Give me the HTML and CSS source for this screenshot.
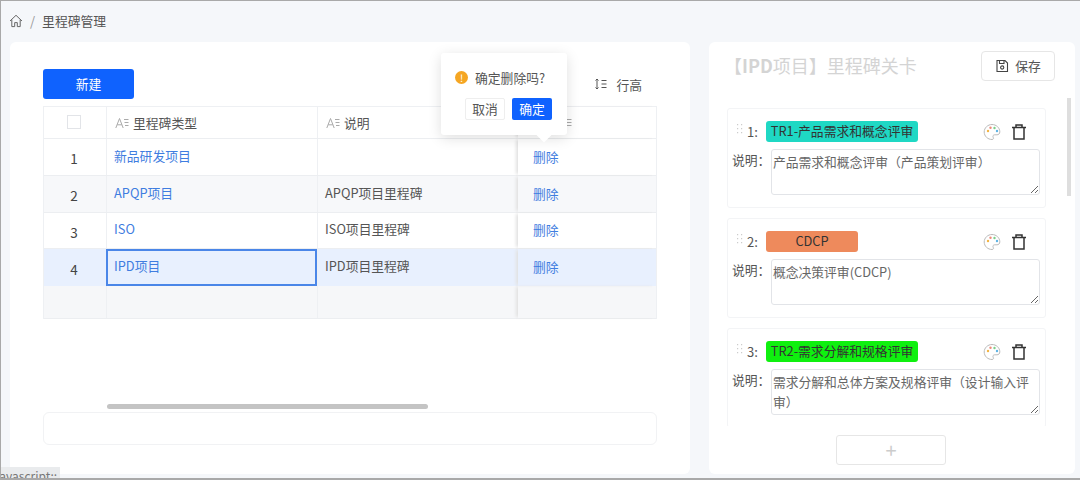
FILE: index.html
```html
<!DOCTYPE html>
<html lang="zh-CN">
<head>
<meta charset="utf-8">
<title>里程碑管理</title>
<link rel="stylesheet" href="styles.css">
</head>
<body>
<div class="app">
  <nav class="crumb">
    <svg class="home" viewBox="0 0 14 14" width="14" height="14"><path d="M1 7 7 1.3 13 7M2.800 5.600V12.600H5.700V8.600H8.300V12.600H11.200V5.600" fill="none" stroke="#666" stroke-width="1"/></svg>
    <span class="sep">/</span>
    <span class="crumb-title">里程碑管理</span>
  </nav>
  <main class="main">
    <section class="panel left">
      <div class="toolbar">
        <button class="btn-new">新建</button>
        <div class="row-height">
          <svg viewBox="0 0 14 14" width="14" height="14"><path d="M3 2V12M1.500 3.500 3 2 4.500 3.500M1.500 10.500 3 12 4.500 10.500M7.500 3.500H12.500M7.500 7H12.500M7.500 10.500H12.500" fill="none" stroke="#555" stroke-width="1"/></svg>
          <span>行高</span>
        </div>
      </div>
      <div class="table">
        <div class="row head">
          <div class="cell num"><span class="check"></span></div>
          <div class="cell"><svg class="aicon" viewBox="0 0 14 12" width="14" height="12"><path d="M.8 11 4.500 1.500 8.200 11M2.200 7.800H6.800M9 2.500H13.500M9.500 5.500H13.500M10 8.500H13.500" fill="none" stroke="#aaa" stroke-width="1"/></svg>里程碑类型</div>
          <div class="cell"><svg class="aicon" viewBox="0 0 14 12" width="14" height="12"><path d="M.8 11 4.500 1.500 8.200 11M2.200 7.800H6.800M9 2.500H13.500M9.500 5.500H13.500M10 8.500H13.500" fill="none" stroke="#aaa" stroke-width="1"/></svg>说明</div>
          <div class="cell act"><svg class="aicon" viewBox="0 0 14 12" width="14" height="12"><path d="M9 2.500H13.500M9 5.500H13.500M9 8.500H13.500" fill="none" stroke="#aaa" stroke-width="1"/></svg></div>
        </div>
        <div class="row r1">
          <div class="cell num">1</div>
          <div class="cell"><a class="link">新品研发项目</a></div>
          <div class="cell"></div>
          <div class="cell act"><a class="link">删除</a></div>
        </div>
        <div class="row r2 alt">
          <div class="cell num">2</div>
          <div class="cell"><a class="link">APQP项目</a></div>
          <div class="cell">APQP项目里程碑</div>
          <div class="cell act"><a class="link">删除</a></div>
        </div>
        <div class="row r3">
          <div class="cell num">3</div>
          <div class="cell"><a class="link">ISO</a></div>
          <div class="cell">ISO项目里程碑</div>
          <div class="cell act"><a class="link">删除</a></div>
        </div>
        <div class="row r4 selected">
          <div class="cell num">4</div>
          <div class="cell active"><a class="link">IPD项目</a></div>
          <div class="cell">IPD项目里程碑</div>
          <div class="cell act"><a class="link">删除</a></div>
        </div>
        <div class="row r5 blank">
          <div class="cell num"></div>
          <div class="cell"></div>
          <div class="cell"></div>
          <div class="cell act"></div>
        </div>
      </div>
      <div class="hscroll"><div class="hthumb"></div></div>
      <div class="footer-box"></div>
    </section>

    <section class="panel right">
      <header class="right-head">
        <h2 class="right-title">【<b>IPD</b>项目】里程碑关卡</h2>
        <button class="btn-save">
          <svg viewBox="0 0 14 14" width="14" height="14"><path d="M2 1.500H10L12.500 4V12.500H2ZM4.500 1.500V4.500H9V1.500" fill="none" stroke="#444" stroke-width="1.100"/><circle cx="7.200" cy="8.500" r="1.600" fill="none" stroke="#444" stroke-width="1.100"/></svg>
          保存
        </button>
      </header>
      <div class="list-wrap">
        <div class="cards">
          <article class="card">
            <div class="card-top">
              <svg class="drag" viewBox="0 0 8 12" width="8" height="12"><path d="M1 1h1.200v1.200H1zM5 1h1.200v1.200H5zM1 5h1.200v1.200H1zM5 5h1.200v1.200H5zM1 9h1.200v1.200H1zM5 9h1.200v1.200H5z" fill="#ccc"/></svg>
              <span class="idx">1:</span>
              <span class="tag teal">TR1-产品需求和概念评审</span>
              <svg class="palette" viewBox="0 0 18 18" width="18" height="18"><path d="M9 1.500C4.800 1.500 1.200 4.800 1.200 9S4.800 16.500 9 16.500C10.500 16.500 10.800 15.300 10.200 14.300 9.500 13 10.200 11.800 11.700 11.800H14C15.700 11.800 16.800 10.700 16.800 8.800 16.800 4.700 13.200 1.500 9 1.500Z" fill="#fff" stroke="#bbb"/><circle cx="5" cy="8" r="1.200" fill="#f2b544"/><circle cx="7.500" cy="4.800" r="1.200" fill="#ef8a7a"/><circle cx="11.500" cy="5" r="1.200" fill="#7ccf8a"/><circle cx="14" cy="8" r="1.200" fill="#5fb4e5"/></svg>
              <svg class="trash" viewBox="0 0 16 18" width="16" height="18"><path d="M1 4.500H15M5 4.500V2H11V4.500M3 4.500V16H13V4.500" fill="none" stroke="#333" stroke-width="1.500"/></svg>
            </div>
            <div class="card-body">
              <label class="desc-label">说明&#xFF1A;</label>
              <textarea class="desc" readonly>产品需求和概念评审&#xFF08;产品策划评审&#xFF09;</textarea>
            </div>
          </article>
          <article class="card">
            <div class="card-top">
              <svg class="drag" viewBox="0 0 8 12" width="8" height="12"><path d="M1 1h1.200v1.200H1zM5 1h1.200v1.200H5zM1 5h1.200v1.200H1zM5 5h1.200v1.200H5zM1 9h1.200v1.200H1zM5 9h1.200v1.200H5z" fill="#ccc"/></svg>
              <span class="idx">2:</span>
              <span class="tag orange">CDCP</span>
              <svg class="palette" viewBox="0 0 18 18" width="18" height="18"><path d="M9 1.500C4.800 1.500 1.200 4.800 1.200 9S4.800 16.500 9 16.500C10.500 16.500 10.800 15.300 10.200 14.300 9.500 13 10.200 11.800 11.700 11.800H14C15.700 11.800 16.800 10.700 16.800 8.800 16.800 4.700 13.200 1.500 9 1.500Z" fill="#fff" stroke="#bbb"/><circle cx="5" cy="8" r="1.200" fill="#f2b544"/><circle cx="7.500" cy="4.800" r="1.200" fill="#ef8a7a"/><circle cx="11.500" cy="5" r="1.200" fill="#7ccf8a"/><circle cx="14" cy="8" r="1.200" fill="#5fb4e5"/></svg>
              <svg class="trash" viewBox="0 0 16 18" width="16" height="18"><path d="M1 4.500H15M5 4.500V2H11V4.500M3 4.500V16H13V4.500" fill="none" stroke="#333" stroke-width="1.500"/></svg>
            </div>
            <div class="card-body">
              <label class="desc-label">说明&#xFF1A;</label>
              <textarea class="desc" readonly>概念决策评审(CDCP)</textarea>
            </div>
          </article>
          <article class="card">
            <div class="card-top">
              <svg class="drag" viewBox="0 0 8 12" width="8" height="12"><path d="M1 1h1.200v1.200H1zM5 1h1.200v1.200H5zM1 5h1.200v1.200H1zM5 5h1.200v1.200H5zM1 9h1.200v1.200H1zM5 9h1.200v1.200H5z" fill="#ccc"/></svg>
              <span class="idx">3:</span>
              <span class="tag green">TR2-需求分解和规格评审</span>
              <svg class="palette" viewBox="0 0 18 18" width="18" height="18"><path d="M9 1.500C4.800 1.500 1.200 4.800 1.200 9S4.800 16.500 9 16.500C10.500 16.500 10.800 15.300 10.200 14.300 9.500 13 10.200 11.800 11.700 11.800H14C15.700 11.800 16.800 10.700 16.800 8.800 16.800 4.700 13.200 1.500 9 1.500Z" fill="#fff" stroke="#bbb"/><circle cx="5" cy="8" r="1.200" fill="#f2b544"/><circle cx="7.500" cy="4.800" r="1.200" fill="#ef8a7a"/><circle cx="11.500" cy="5" r="1.200" fill="#7ccf8a"/><circle cx="14" cy="8" r="1.200" fill="#5fb4e5"/></svg>
              <svg class="trash" viewBox="0 0 16 18" width="16" height="18"><path d="M1 4.500H15M5 4.500V2H11V4.500M3 4.500V16H13V4.500" fill="none" stroke="#333" stroke-width="1.500"/></svg>
            </div>
            <div class="card-body">
              <label class="desc-label">说明&#xFF1A;</label>
              <textarea class="desc" readonly>需求分解和总体方案及规格评审&#xFF08;设计输入评审&#xFF09;</textarea>
            </div>
          </article>
        </div>
        <div class="vthumb"></div>
      </div>
      <div class="add-row"><button class="btn-add">+</button></div>
    </section>
  </main>

  <div class="popover">
    <div class="pop-msg">
      <span class="warn">!</span>
      <span>确定删除吗?</span>
    </div>
    <div class="pop-actions">
      <button class="pop-cancel">取消</button>
      <button class="pop-ok">确定</button>
    </div>
  </div>
  <div class="status">javascript:;</div>
</div>
</body>
</html>
```

FILE: styles.css
```css
* { box-sizing: border-box; }
html, body { margin: 0; height: 100%; overflow: hidden; }
body {
  font-family: "Noto Sans CJK SC", "Noto Sans", sans-serif;
  font-size: 12.8px;
  color: #555;
  background: #f5f7fa;
}
button { font-family: inherit; font-size: inherit; cursor: pointer; }

.app {
  position: relative;
  width: 1080px;
  height: 480px;
  border-top: 1px solid #a9a9a9;
  border-left: 1px solid #a9a9a9;
  border-bottom: 2px solid #a9a9a9;
  overflow: hidden;
}

.crumb { height: 41px; padding: 0 0 2px 8px; display: flex; align-items: center; gap: 7px; }
.home { flex: none; }
.sep { color: #999; font-size: 13px; }
.crumb-title { color: #555; }

.main { display: flex; gap: 19px; padding: 0 0 0 9px; height: 432px; }
.panel { background: #fff; border-radius: 6px; height: 432px; }
.left { width: 680px; padding: 27px 33px 0; flex: none; }
.right { width: 366px; flex: none; padding: 9px 4px 0 18px; }

.toolbar { height: 30px; display: flex; justify-content: space-between; align-items: center; margin-bottom: 7px; }
.btn-new {
  width: 91px; height: 30px; padding: 0 0 2px; border: 0; border-radius: 3px;
  background: #0f62fe; color: #fff;
}
.row-height { display: flex; align-items: center; gap: 8px; margin-right: 15px; color: #555; }

.table { border: 1px solid #eef0f3; border-bottom: 0; width: 614px; }
.row { display: grid; grid-template-columns: 62px 211px 201px 1fr; align-items: stretch; border-bottom: 1px solid #eceef1; }
.head { height: 32px; }
.r1, .r2 { height: 37px; }
.r3 { height: 36px; }
.r4 { height: 37px; border-bottom: 0; }
.r5 { height: 33px; }
.alt { background: #f7f8fa; }
.selected { background: #e8f0fe; }
.blank { background: #f6f7f9; }
.cell {
  display: flex; align-items: center; padding: 0 0 4px 7px;
  border-left: 1px solid #eef0f3; color: #555; white-space: nowrap; position: relative;
}
.cell:first-child { border-left: 0; }
.head .cell { padding: 0 0 0 8px; color: #555; }
.aicon { margin-right: 4px; flex: none; }
.num { justify-content: center; padding: 2px 2px 0 0; font-size: 13.5px; color: #444; }
.head .num { padding: 0 2px 2px 0; }
.check { width: 14px; height: 14px; border: 1px solid #e2e4e8; background: #fff; display: block; }
.link { color: #3f7de0; }
.act { padding: 0 0 2px 15px; border-left: 0; box-shadow: -3px 0 3px -1px #e2e2e2; }
.head .act { padding: 0 0 0 40px; }
.active { outline: 2px solid #4a86e8; outline-offset: -2px; border-left: 0; }
.selected .active { padding-left: 8px; }

.hscroll { margin-top: 85px; height: 5px; padding-left: 64px; }
.hthumb { width: 321px; height: 5px; border-radius: 3px; background: #c4c4c4; }
.footer-box { margin-top: 3px; height: 33px; border: 1px solid #f1f2f4; border-radius: 6px; }

.right-head { display: flex; justify-content: space-between; align-items: center; height: 30px; margin-right: 16px; }
.right-title { margin: 0 0 2px -3px; font-size: 18px; font-weight: 400; color: #d4d4d4; white-space: nowrap; }
.right-title b { font-weight: 700; }
.btn-save {
  width: 74px; height: 30px; padding: 0 0 1px; display: flex; align-items: center; justify-content: center; gap: 6px;
  background: #fff; border: 1px solid #e6e6e6; border-radius: 4px; color: #555;
}

.list-wrap { display: flex; align-items: flex-start; gap: 21px; margin-top: 17px; height: 328px; overflow: hidden; }
.cards { width: 319px; flex: none; padding-top: 10px; display: flex; flex-direction: column; gap: 10px; }
.vthumb { width: 4px; height: 98px; background: #dedede; flex: none; }
.card { flex: none; height: 100px; padding: 12px 5px 0 4px; border: 1px solid #f3f4f6; border-radius: 3px; }
.card-top { display: flex; align-items: center; height: 21px; }
.drag { flex: none; margin: -5px 0 0 4px; }
.idx { margin-left: 3px; width: 19px; color: #555; font-size: 13px; }
.tag { height: 21px; line-height: 20px; border-radius: 3px; color: #333; text-align: center; white-space: nowrap; }
.teal { width: 152px; background: #1fd8c4; }
.orange { width: 92px; background: #ee8a5c; }
.green { width: 152px; background: #0ff00f; }
.palette { flex: none; margin-left: auto; margin-right: 10px; }
.trash { flex: none; margin-right: 13px; }

.card-body { display: flex; align-items: flex-start; margin-top: 7px; }
.desc-label { width: 39px; padding-top: 1px; line-height: 20px; color: #555; white-space: nowrap; }
.desc {
  width: 270px; height: 46px; padding: 2px 2px 2px 1px; border: 1px solid #e2e4e8; border-radius: 3px;
  font-family: inherit; font-size: 12.8px; line-height: 20px; color: #666; background: #fff; outline: 0;
}

.add-row { padding: 9px 0 0 109px; }
.btn-add {
  width: 110px; height: 30px; border: 1px solid #e6e6e6; border-radius: 3px; background: #fff;
  color: #ccc; font-size: 20px; line-height: 1; padding: 0;
}

.popover {
  position: absolute; left: 440px; top: 52px; width: 126px; height: 82px;
  padding: 13px 15px 0 14px; background: #fff; border-radius: 3px;
  box-shadow: 0 3px 14px rgba(0,0,0,.13);
}
.popover::after {
  content: ""; position: absolute; left: 97px; bottom: -5px; width: 12px; height: 12px;
  background: #fff; transform: rotate(45deg);
}
.pop-msg { display: flex; align-items: center; gap: 7px; height: 24px; color: #555; margin-top: -1px; }
.warn {
  width: 13px; height: 13px; border-radius: 50%; background: #f5a623; color: #fff;
  font-size: 10px; line-height: 13px; text-align: center; flex: none;
}
.pop-actions { display: flex; justify-content: flex-end; gap: 7px; margin-top: 9px; position: relative; z-index: 1; }
.pop-cancel, .pop-ok { width: 40px; height: 22px; padding: 0; border-radius: 2px; font-size: 12.8px; line-height: 20px; }
.pop-cancel { background: #fff; border: 1px solid #eee; color: #555; }
.pop-ok { background: #0f62fe; border: 0; color: #fff; }

.status {
  position: absolute; left: -1px; bottom: -9px; width: 60px; height: 20px;
  background: #e9ebed; color: #777; font-size: 12px; line-height: 18px; overflow: hidden; white-space: nowrap; text-indent: -4px;
}
```
